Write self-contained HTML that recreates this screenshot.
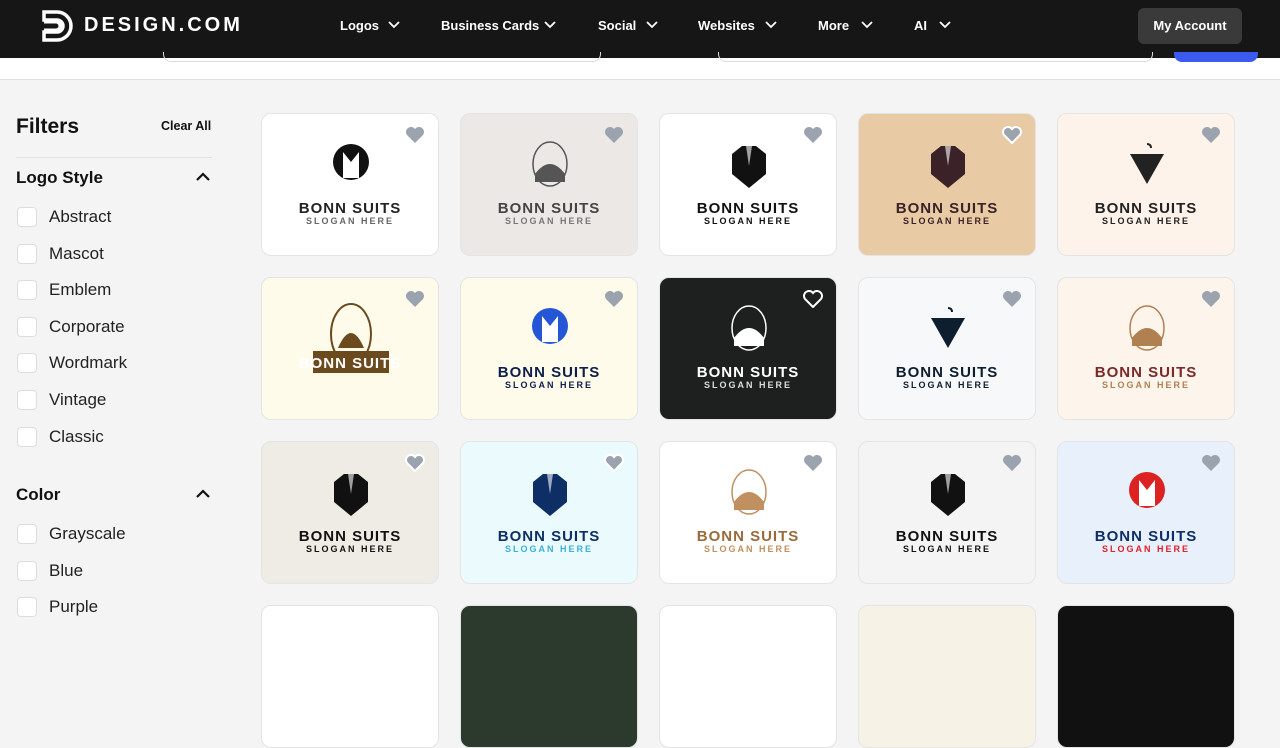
<!DOCTYPE html>
<html><head><meta charset="utf-8"><style>
*{box-sizing:border-box;margin:0;padding:0}
body{width:1280px;height:609px;overflow:hidden;background:#f4f4f4;font-family:"Liberation Sans",Arial,sans-serif;position:relative}
.hdr{position:absolute;left:0;top:0;width:1280px;height:58px;background:#161616}
.nav{position:absolute;top:18px;color:#fff;font-size:13px;font-weight:bold}
.nav svg{position:absolute;top:3px}
.acct{position:absolute;left:1138px;top:8px;width:104px;height:36px;background:#3a3a3a;border-radius:6px;color:#fff;font-size:13px;font-weight:bold;text-align:center;line-height:36px}
.strip{position:absolute;left:0;top:58px;width:1280px;height:22px;background:#fff;border-bottom:1px solid #e2e2e2}
.cb{position:absolute;left:17px;width:20px;height:20px;background:#fff;border:1px solid #ddd;border-radius:4px}
.lbl{position:absolute;left:49px;font-size:17px;color:#222}
.card{position:absolute;width:178px;height:143px;border-radius:10px;border:1px solid #e4e4e4;overflow:hidden;text-align:center}
.card .hrt{position:absolute;right:13px;top:12px}
.card .ic{position:absolute;left:64px;top:26px}
.t1{position:absolute;left:0;width:100%;font-weight:bold;font-size:15px;letter-spacing:1px}
.t2{position:absolute;left:0;width:100%;font-size:9px;letter-spacing:2px;font-weight:bold}
</style></head><body>
<div class="hdr">
<svg style="position:absolute;left:41px;top:9px" width="34" height="34" viewBox="0 0 34 34"><path d="M3 3h13a14 14 0 0 1 0 28H3v-8h13a6 6 0 0 0 0-12H3z" fill="none" stroke="#fff" stroke-width="3.5"/><path d="M3 13h12a4 4 0 0 1 0 8H3" fill="none" stroke="#fff" stroke-width="3"/></svg>
<div style="position:absolute;left:84px;top:14px;color:#fff;font-size:20px;font-weight:bold;letter-spacing:3px">DESIGN.COM</div>
<div class="nav" style="left:340px">Logos<svg style="left:48px" width="12" height="8" viewBox="0 0 12 8"><path d="M1 1l5 5 5-5" fill="none" stroke="#fff" stroke-width="1.8"/></svg></div>
<div class="nav" style="left:441px">Business Cards<svg style="left:103px" width="12" height="8" viewBox="0 0 12 8"><path d="M1 1l5 5 5-5" fill="none" stroke="#fff" stroke-width="1.8"/></svg></div>
<div class="nav" style="left:598px">Social<svg style="left:48px" width="12" height="8" viewBox="0 0 12 8"><path d="M1 1l5 5 5-5" fill="none" stroke="#fff" stroke-width="1.8"/></svg></div>
<div class="nav" style="left:698px">Websites<svg style="left:67px" width="12" height="8" viewBox="0 0 12 8"><path d="M1 1l5 5 5-5" fill="none" stroke="#fff" stroke-width="1.8"/></svg></div>
<div class="nav" style="left:818px">More<svg style="left:43px" width="12" height="8" viewBox="0 0 12 8"><path d="M1 1l5 5 5-5" fill="none" stroke="#fff" stroke-width="1.8"/></svg></div>
<div class="nav" style="left:914px">AI<svg style="left:25px" width="12" height="8" viewBox="0 0 12 8"><path d="M1 1l5 5 5-5" fill="none" stroke="#fff" stroke-width="1.8"/></svg></div>
<div class="acct">My Account</div>
</div>
<div class="strip">
<div style="position:absolute;left:163px;top:-6px;width:438px;height:10px;border:1px solid #ddd;border-top:none;border-radius:0 0 8px 8px"></div>
<div style="position:absolute;left:718px;top:-6px;width:435px;height:10px;border:1px solid #ddd;border-top:none;border-radius:0 0 8px 8px"></div>
<div style="position:absolute;left:1174px;top:-6px;width:84px;height:10px;background:#3a5af0;border-radius:0 0 8px 8px"></div>
</div>
<div style="position:absolute;left:16px;top:115px;font-size:21px;font-weight:bold;color:#111">Filters</div>
<div style="position:absolute;left:161px;top:119px;font-size:12.5px;font-weight:bold;color:#111">Clear All</div>
<div style="position:absolute;left:16px;top:157px;width:196px;height:1px;background:#e2e2e2"></div>
<div style="position:absolute;left:16px;top:168px;font-size:17px;font-weight:bold;color:#111">Logo Style</div>
<svg style="position:absolute;left:196px;top:172px" width="14" height="10" viewBox="0 0 14 10"><path d="M1 8l6-6 6 6" fill="none" stroke="#111" stroke-width="2.2"/></svg>
<div class="cb" style="top:207px"></div><div class="lbl" style="top:207px">Abstract</div>
<div class="cb" style="top:244px"></div><div class="lbl" style="top:244px">Mascot</div>
<div class="cb" style="top:280px"></div><div class="lbl" style="top:280px">Emblem</div>
<div class="cb" style="top:317px"></div><div class="lbl" style="top:317px">Corporate</div>
<div class="cb" style="top:353px"></div><div class="lbl" style="top:353px">Wordmark</div>
<div class="cb" style="top:390px"></div><div class="lbl" style="top:390px">Vintage</div>
<div class="cb" style="top:427px"></div><div class="lbl" style="top:427px">Classic</div>
<div style="position:absolute;left:16px;top:485px;font-size:17px;font-weight:bold;color:#111">Color</div>
<svg style="position:absolute;left:196px;top:489px" width="14" height="10" viewBox="0 0 14 10"><path d="M1 8l6-6 6 6" fill="none" stroke="#111" stroke-width="2.2"/></svg>
<div class="cb" style="top:524px"></div><div class="lbl" style="top:524px">Grayscale</div>
<div class="cb" style="top:561px"></div><div class="lbl" style="top:561px">Blue</div>
<div class="cb" style="top:597px"></div><div class="lbl" style="top:597px">Purple</div>

<div id="g"></div>
<script>
var cols=[261,460,659,858,1057],rows=[113,277,441,605];
var d=[
["#fff","#222","#666","c","#111",0],["#ece8e6","#444","#777","o","#555",0],["#fff","#111","#111","s","#111",0],["#e8cba5","#3a2228","#3a2228","s","#3a2228",1],["#fdf3ea","#222","#222","v","#222",0],
["#fffbeb","#fff","#fff","b","#6b4a1e",0],["#fffbeb","#0d1e4a","#0d1e4a","c","#2456d6",0],["#1e1f1f","#fff","#ddd","o","#fff",1],["#f7f8fa","#0d1e2e","#0d1e2e","v","#0d1e2e",0],["#fdf4ec","#7a2a2a","#b08050","o","#b08050",0],
["#efece6","#111","#111","s","#111",1],["#ebfbfd","#0d2f66","#3bb0d8","s","#0d2f66",1],["#fff","#9a6a3a","#c09060","o","#c09060",0],["#f4f4f4","#111","#111","s","#111",0],["#e8f0fb","#0d2f66","#e0202a","c","#d22",0],
["#fff","","","",""],["#2b3a2c","","","",""],["#fff","","","",""],["#f6f3e6","","","",""],["#111","","","",""]];
var h='';
d.forEach(function(c,i){var x=cols[i%5],y=rows[Math.floor(i/5)];
h+='<div class="card" style="left:'+x+'px;top:'+y+'px;background:'+c[0]+'">';
if(c[1]){var ic='';
if(c[3]=='c')ic='<circle cx="25" cy="22" r="18" fill="'+c[4]+'"/><path d="M17 12l8 10 8-10v26H17z" fill="#fff"/>';
else if(c[3]=='o')ic='<ellipse cx="25" cy="24" rx="17" ry="22" fill="none" stroke="'+c[4]+'" stroke-width="1.5"/><path d="M10 34q15-20 30 0v8H10z" fill="'+c[4]+'"/>';
else if(c[3]=='v')ic='<path d="M8 14h34L25 44z" fill="'+c[4]+'"/><path d="M25 4q4 0 4 4" fill="none" stroke="'+c[4]+'" stroke-width="2"/>';
else if(c[3]=='b')ic='<ellipse cx="25" cy="30" rx="20" ry="30" fill="none" stroke="'+c[4]+'" stroke-width="2"/><path d="M12 44q13-30 26 0z" fill="'+c[4]+'"/><rect x="-13" y="47" width="76" height="22" fill="'+c[4]+'"/>';
else ic='<path d="M8 14l10-8h14l10 8v20L25 48 8 34z" fill="'+c[4]+'"/><path d="M22 6l3 20 3-20" fill="#fff" opacity=".6"/>';
var ty=c[3]=='b'?77:86;
h+='<svg class="ic" width="50" height="50" viewBox="0 0 50 50" style="overflow:visible">'+ic+'</svg>';
h+='<div class="t1" style="top:'+ty+'px;color:'+c[1]+'">BONN SUITS</div>';
if(c[3]!='b')h+='<div class="t2" style="top:'+(ty+16)+'px;color:'+c[2]+'">SLOGAN HERE</div>';
var hc=c[5]?'#fff':'#9aa3ae';
h+='<svg class="hrt" width="20" height="18" viewBox="0 0 20 18"><path d="M10 17L2 9a4.6 4.6 0 0 1 8-6 4.6 4.6 0 0 1 8 6z" fill="'+(c[5]&&c[0]=='#1e1f1f'?'#1e1f1f':'#9aa3ae')+'" stroke="'+hc+'" stroke-width="'+(c[5]?2:0)+'"/></svg>';}
h+='</div>';});
document.getElementById('g').innerHTML=h;
</script>
</body></html>
